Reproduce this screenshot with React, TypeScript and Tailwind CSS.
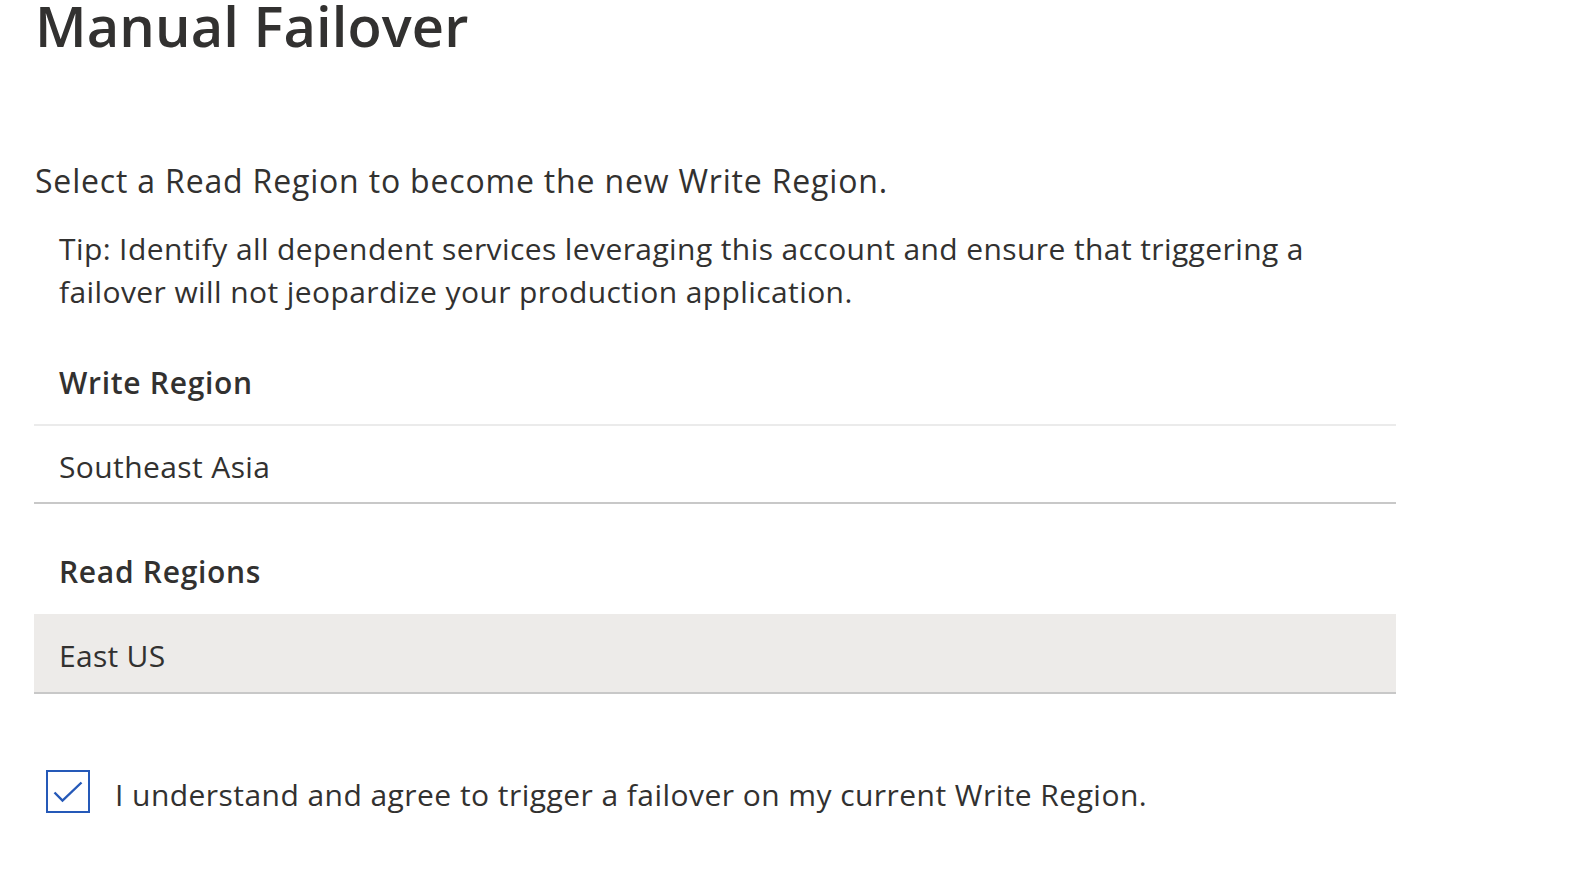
import { useState } from 'react';

const App = () => {
  const [agreed, setAgreed] = useState(true);

  return (
    <div className="min-h-screen w-full bg-white text-[#323130] font-['Open_Sans',sans-serif] overflow-hidden">
      <div className="pl-[34px] w-[1396px]">
        {/* Title */}
        <h1 className="-mt-[4px] text-[56px] leading-[58px] font-semibold tracking-[0.1px] pl-[1px]">Manual Failover</h1>

        <p className="mt-[107px] text-[32px] leading-[40px] tracking-[0.82px] pl-[1px]">
          Select a Read Region to become the new Write Region.
        </p>

        <p className="mt-[26px] text-[30px] leading-[43px] tracking-[0.4px] px-[25px]">
          Tip: Identify all dependent services leveraging this account and ensure that triggering a failover will not jeopardize your production application.
        </p>

        {/* Write region */}
        <div className="mt-[50px] pl-[25px] pb-[21px] border-b-2 border-[#ebebeb]">
          <div className="text-[30px] leading-[40px] font-semibold tracking-[0.7px]">Write Region</div>
        </div>
        <div className="pl-[25px] pt-[21px] pb-[15px] border-b-2 border-[#c8c8c8]">
          <div className="text-[30px] leading-[40px] tracking-[0.4px]">Southeast Asia</div>
        </div>

        {/* Read regions */}
        <div className="mt-[48px] pl-[25px] pb-[22px]">
          <div className="text-[30px] leading-[40px] font-semibold tracking-[0.7px]">Read Regions</div>
        </div>
        <div className="pl-[25px] pt-[22px] pb-[16px] bg-[#edebe9] border-b-2 border-[#c8c8c8]">
          <div className="text-[30px] leading-[40px] tracking-[0.3px]">East US</div>
        </div>

        {/* Agreement */}
        <label className="mt-[76px] ml-[12px] flex items-start gap-[25px] cursor-pointer">
          <button
            type="button"
            onClick={() => setAgreed(!agreed)}
            className="w-[44px] h-[43px] shrink-0 border-2 border-[#2559b8] bg-white flex items-center justify-center"
          >
            {agreed && (
              <svg width="30" height="22" viewBox="0 0 30 22" fill="none">
                <path d="M1.5 11.5 L9.5 19.5 L28.5 1.5" stroke="#2559b8" strokeWidth="2.4" />
              </svg>
            )}
          </button>
          <span className="mt-[5px] text-[30px] leading-[40px] tracking-[0.45px]">
            I understand and agree to trigger a failover on my current Write Region.
          </span>
        </label>
      </div>
    </div>
  );
};

export default App;
